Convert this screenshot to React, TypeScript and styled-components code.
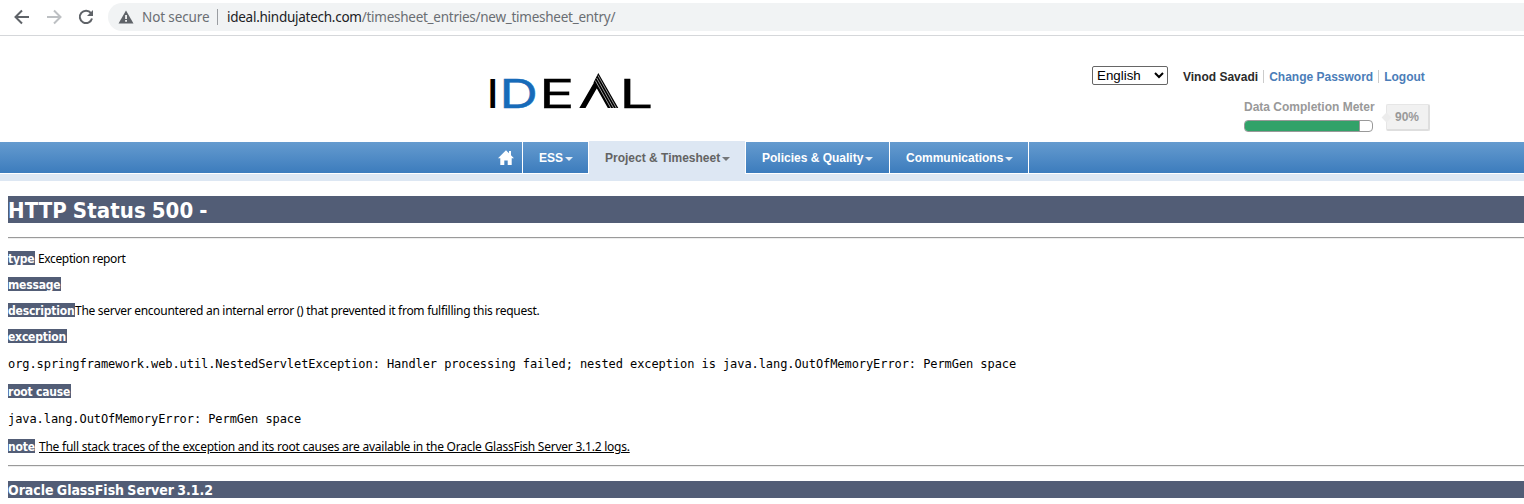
import React from "react";
import styled, { createGlobalStyle, css } from "styled-components";

const Global = createGlobalStyle`
  html, body { margin: 0; padding: 0; background: #fff; overflow: hidden; }
  * { box-sizing: border-box; }
`;

const arial = `"Liberation Sans", Arial, sans-serif`;
const tahoma = `Tahoma, "Noto Sans", sans-serif`;
const tahomaBold = `Tahoma, "DejaVu Sans Condensed", "DejaVu Sans", sans-serif`;

const Page = styled.div`
  width: 100%;
  height: 504px;
  overflow: hidden;
  display: flex;
  flex-direction: column;
`;

/* Browser toolbar */
const Toolbar = styled.div`
  display: flex;
  align-items: flex-start;
  height: 36px;
  flex: none;
  padding: 3px 0 0 14px;
  border-bottom: 1px solid #d5d7da;
`;
const ToolIcons = styled.div`
  display: flex;
  gap: 16px;
  width: 94px;
  padding-top: 6px;
`;
const Omnibox = styled.div`
  flex: 1;
  height: 28px;
  display: flex;
  align-items: center;
  padding-left: 10px;
  border-radius: 14px 0 0 14px;
  background: #f1f3f4;
  font: 13.5px/28px "Noto Sans", sans-serif;
  white-space: nowrap;
`;
const Security = styled.span`
  width: 67px;
  margin-left: 8px;
  color: #6a6e73;
  letter-spacing: -0.12px;
`;
const Divider = styled.span`
  width: 1px;
  height: 16px;
  margin: 0 9px 0 8px;
  background: #9a9da1;
`;
const Url = styled.span`
  color: #202124;
  letter-spacing: -0.26px;
`;
const UrlPath = styled.span`
  color: #6a6e73;
`;

/* Site header */
const Header = styled.header`
  display: flex;
  justify-content: space-between;
  height: 105px;
  flex: none;
  padding: 30px 94px 0 480px;
  font: bold 12px/19px ${arial};
`;
const Logo = styled.svg`
  display: block;
  margin-top: -1px;
`;
const Account = styled.div`
  width: 338px;
  margin-left: auto;
`;
const AccountRow = styled.div`
  display: flex;
  align-items: flex-start;
  height: 22px;
  white-space: nowrap;
`;
const Language = styled.select`
  width: 76px;
  height: 19px;
  margin-right: 15px;
  padding: 0;
  border: 1px solid #666;
  border-radius: 2px;
  background-color: #fff;
  color: #000;
  font: 13.33px ${arial};
`;
const UserName = styled.span`
  padding-top: 2px;
  color: #2b2b2b;
`;
const HeaderLink = styled.a`
  height: 13px;
  margin: 4px 0 0 5px;
  padding-left: 5px;
  border-left: 1px solid #ccc;
  color: #4b7db8;
  line-height: 15px;
`;
const MeterRow = styled.div`
  display: flex;
  align-items: flex-start;
  margin: 10px 0 0 152px;
`;
const Meter = styled.div`
  width: 131px;
  color: #999;
  line-height: 19px;
  white-space: nowrap;
`;
const Track = styled.div`
  width: 129px;
  height: 12px;
  margin-top: 3px;
  overflow: hidden;
  border: 1px solid #999;
  border-radius: 4px;
  background: #fff;
`;
const Fill = styled.div`
  width: 115px;
  height: 100%;
  border-right: 1px solid #999;
  background: #31a269;
`;
const Percent = styled.div`
  position: relative;
  width: 44px;
  height: 27px;
  margin: 6px 0 0 11px;
  padding-right: 1px;
  border: 1px solid #e6e6e6;
  border-right: 2px solid #dedede;
  border-bottom: 2px solid #dedede;
  border-radius: 2px;
  background: #f1f1f1;
  color: #999;
  line-height: 24px;
  text-align: center;
  &::before {
    content: "";
    position: absolute;
    left: -4px;
    top: 9px;
    width: 7px;
    height: 7px;
    background: #ececec;
    transform: rotate(45deg);
  }
`;

/* Navigation */
const Nav = styled.nav`
  display: flex;
  height: 33px;
  flex: none;
  padding-left: 481px;
  background: linear-gradient(#fff 0 1px, #659bcf 1px, #3c7cbd 32px, #fff 32px);
  font: bold 12px/33px ${arial};
`;
const Tab = styled.a<{ $width: number; $active?: boolean }>`
  display: flex;
  align-items: center;
  width: ${(p) => p.$width}px;
  padding-left: 16px;
  border-right: 1px solid #fff;
  color: #fff;
  white-space: nowrap;
  ${(p) =>
    p.$active &&
    css`
      background: #dde7f3;
      color: #636363;
    `}
`;
const TabText = styled.span`
  padding-top: 1px;
`;
const Caret = styled.i`
  margin: 3px 0 0 1.5px;
  border: 4px solid transparent;
  border-top-color: currentColor;
  border-bottom: 0;
  opacity: 0.85;
`;
const SubNav = styled.div`
  height: 7px;
  flex: none;
  background: #dde7f3;
`;

/* Error report */
const Report = styled.main`
  padding: 15px 0 0 8px;
  color: #000;
  font: 12px/16px ${tahoma};
  white-space: nowrap;
`;
const Title = styled.h1`
  height: 27px;
  margin: 0 0 14px;
  background: #525d76;
  color: #fff;
  font: bold 22px/29px ${tahomaBold};
  letter-spacing: 0.08px;
  word-spacing: -1px;
`;
const Rule = styled.div<{ $top?: number }>`
  height: 2px;
  margin-top: ${(p) => p.$top ?? 0}px;
  border-top: 1px solid #9a9a9a;
  border-bottom: 1px solid #eee;
`;
const Line = styled.div<{ $top: number }>`
  display: flex;
  height: 14px;
  margin-top: ${(p) => p.$top}px;
`;
const Label = styled.b<{ $width: number }>`
  width: ${(p) => p.$width}px;
  height: 14px;
  background: #525d76;
  color: #fff;
  font: bold 12px/16px ${tahomaBold};
  letter-spacing: -0.2px;
`;
const Detail = styled.span<{ $gap?: number; $tracking?: number; $underline?: boolean }>`
  margin-left: ${(p) => p.$gap ?? 0}px;
  letter-spacing: ${(p) => p.$tracking ?? -0.3}px;
  text-decoration: ${(p) => (p.$underline ? "underline" : "none")};
`;
const Trace = styled.pre`
  height: 15px;
  margin: 13px 0 0;
  font: 12px/17px "DejaVu Sans Mono", monospace;
  letter-spacing: -0.075px;
`;
const Footer = styled.h3`
  height: 17px;
  margin: 14px 0 0;
  background: #525d76;
  color: #fff;
  font: bold 14px/18px ${tahomaBold};
  letter-spacing: -0.04px;
  word-spacing: -1px;
`;

const Arrow = ({ flip, color }: { flip?: boolean; color: string }) => (
  <svg width="16" height="16" viewBox="0 0 16 16" fill="none" stroke={color} strokeWidth="2">
    <path d={flip ? "M1 8h13M8 1.5 14.5 8 8 14.5" : "M15 8H2M8 1.5 1.5 8 8 14.5"} />
  </svg>
);

export default function App() {
  return (
    <Page>
      <Global />
      <Toolbar>
        <ToolIcons>
          <Arrow color="#5f6368" />
          <Arrow flip color="#bdc0c3" />
          <svg width="16" height="16" viewBox="0 0 16 16">
            <path d="M13 4.2A6.2 6.2 0 1 0 14 9.5" fill="none" stroke="#5f6368" strokeWidth="2" />
            <path d="M15 1v6H9z" fill="#5f6368" />
          </svg>
        </ToolIcons>
        <Omnibox>
          <svg width="16" height="14" viewBox="0 0 16 14">
            <path d="M8 0.5 15.5 13.5H.5z" fill="#5f6368" />
            <path d="M7.2 5h1.7v4H7.2zM7.2 10h1.7v1.7H7.2z" fill="#fff" />
          </svg>
          <Security>Not secure</Security>
          <Divider />
          <Url>
            ideal.hindujatech.com<UrlPath>/timesheet_entries/new_timesheet_entry/</UrlPath>
          </Url>
        </Omnibox>
      </Toolbar>

      <Header>
        <Logo width="184" height="56" viewBox="-8 -5 184 56" fontFamily="Inter, sans-serif" fontSize="40" fontWeight="400">
          <text transform="translate(-2 38) scale(1.25 1)">I</text>
          <text transform="translate(11.500 38) scale(1.33 1)" fill="#176bb9" stroke="#176bb9" strokeWidth="0.500">D</text>
          <text transform="translate(51 38) scale(1.48 1)" stroke="#000" strokeWidth="0.300">E</text>
          <path d="M91.300 38 106 12.500 109 18 97.500 38zM110.300 3 130.300 38H119.800L105.500 12.500z" />
          <path d="M107.300 10.500 122.800 38M108.700 8 125.600 38M110 5.500 128.300 38" stroke="#fff" strokeWidth="0.600" />
          <text transform="translate(131.300 38) scale(1.5 1)" stroke="#000" strokeWidth="0.300">L</text>
        </Logo>
        <Account>
          <AccountRow>
            <Language defaultValue="English">
              <option>English</option>
            </Language>
            <UserName>Vinod Savadi</UserName>
            <HeaderLink>Change Password</HeaderLink>
            <HeaderLink>Logout</HeaderLink>
          </AccountRow>
          <MeterRow>
            <Meter>
              Data Completion Meter
              <Track>
                <Fill />
              </Track>
            </Meter>
            <Percent>90%</Percent>
          </MeterRow>
        </Account>
      </Header>

      <Nav>
        <Tab $width={42}>
          <svg width="18" height="16" viewBox="0 0 18 16">
            <path d="M9 .3 1 8.200h2.300V15h4v-4.500h3.400V15h4V8.200H17L14 5.200V1h-2v2.200z" fill="#fff" />
          </svg>
        </Tab>
        <Tab $width={66}><TabText>ESS</TabText><Caret /></Tab>
        <Tab $width={157} $active><TabText>Project &amp; Timesheet</TabText><Caret /></Tab>
        <Tab $width={144}><TabText>Policies &amp; Quality</TabText><Caret /></Tab>
        <Tab $width={139}><TabText>Communications</TabText><Caret /></Tab>
      </Nav>
      <SubNav />

      <Report>
        <Title>HTTP Status 500 -</Title>
        <Rule />
        <Line $top={12}>
          <Label $width={27}>type</Label>
          <Detail $gap={3} $tracking={-0.36}>Exception report</Detail>
        </Line>
        <Line $top={12}>
          <Label $width={53}>message</Label>
        </Line>
        <Line $top={12}>
          <Label $width={67}>description</Label>
          <Detail $tracking={-0.285}>The server encountered an internal error () that prevented it from fulfilling this request.</Detail>
        </Line>
        <Line $top={12}>
          <Label $width={59}>exception</Label>
        </Line>
        <Trace>org.springframework.web.util.NestedServletException: Handler processing failed; nested exception is java.lang.OutOfMemoryError: PermGen space</Trace>
        <Line $top={13}>
          <Label $width={63}>root cause</Label>
        </Line>
        <Trace>java.lang.OutOfMemoryError: PermGen space</Trace>
        <Line $top={13}>
          <Label $width={27}>note</Label>
          <Detail $gap={4} $tracking={-0.235} $underline>
            The full stack traces of the exception and its root causes are available in the Oracle GlassFish Server 3.1.2 logs.
          </Detail>
        </Line>
        <Rule $top={12} />
        <Footer>Oracle GlassFish Server 3.1.2</Footer>
      </Report>
    </Page>
  );
}
